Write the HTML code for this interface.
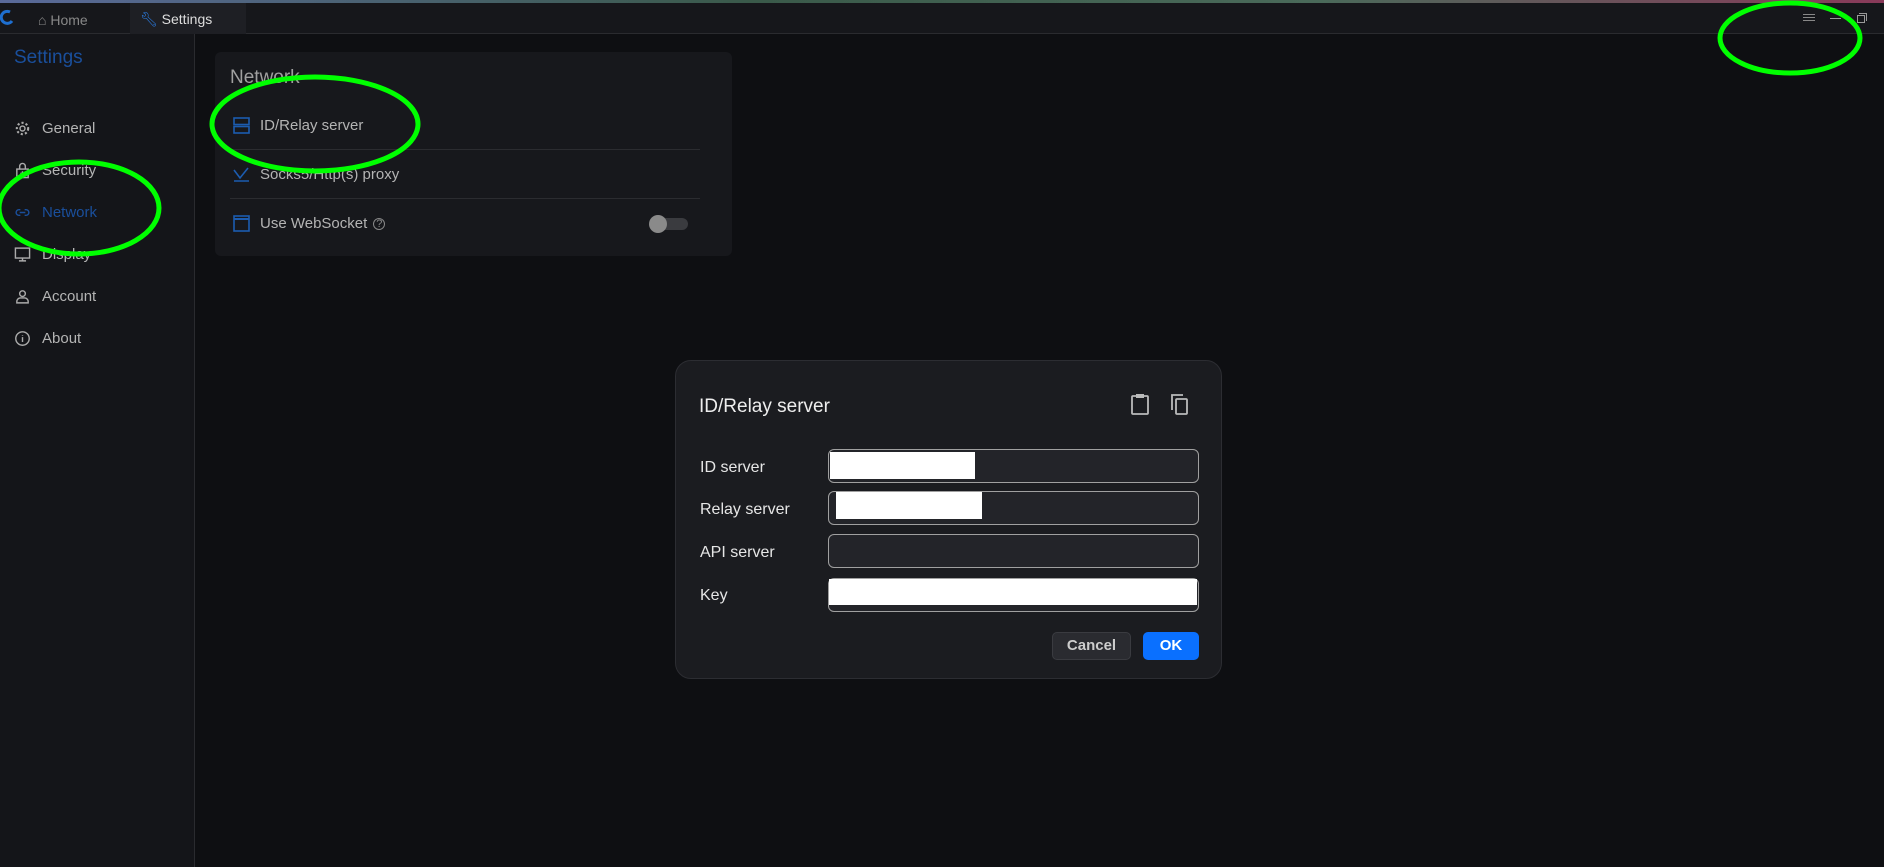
<!DOCTYPE html>
<html><head><meta charset="utf-8"><style>
*{margin:0;padding:0;box-sizing:border-box}
body{width:1884px;height:867px;background:#0e0f12;font-family:"Liberation Sans",sans-serif;position:relative;overflow:hidden;color:#c8c8c8}
.abs{position:absolute}
.topline{left:0;top:0;width:1884px;height:3px;background:linear-gradient(90deg,#5a6a9a,#3a5a4a 40%,#4a6a5a 70%,#8a3a5a)}
.tabbar{left:0;top:3px;width:1884px;height:31px;background:#16171b;border-bottom:1px solid #2a2b2f}
.sidebar{left:0;top:34px;width:195px;height:833px;background:#141519;border-right:1px solid #2a2b2f}
.mi{position:absolute;left:14px;font-size:15px;color:#b4b4b4;display:flex;align-items:center;gap:11px;height:20px}
.mi svg{width:17px;height:17px}
.card{left:215px;top:52px;width:517px;height:204px;background:#17181c;border-radius:6px}
.row{position:absolute;left:18px;font-size:15px;color:#b4b4b4;display:flex;align-items:center;gap:10px}
.div{position:absolute;left:15px;width:470px;height:1px;background:#2b2c30}
.dlg{left:675px;top:360px;width:547px;height:319px;background:#1b1c20;border:1px solid #2c2d32;border-radius:16px}
.lbl{position:absolute;left:24px;font-size:16px;color:#e6e6e6}
.inp{position:absolute;left:152px;width:371px;height:34px;border:1px solid #a0a0a0;border-radius:6px;background:#232429}
.wb{position:absolute;background:#fff}
</style></head><body>
<div class="abs topline"></div>
<div class="abs tabbar">
 <svg class="abs" style="left:0;top:6px" width="16" height="18" viewBox="0 0 16 18"><path d="M10 3 A6 6 0 1 0 12 12" stroke="#1e6fd0" stroke-width="3" fill="none"/></svg>
 <div class="abs" style="left:38px;top:9px;font-size:14px;color:#888">⌂ Home</div>
 <div class="abs" style="left:130px;top:0;width:116px;height:31px;background:#1e1f24"></div>
 <div class="abs" style="left:140px;top:8px;font-size:14px;color:#ddd"><span style="color:#2a7be0">🔧︎</span> Settings</div>
 <div class="abs" style="left:1803px;top:11px;width:12px;height:7px;border-top:1px solid #888;border-bottom:1px solid #888"></div>
 <div class="abs" style="left:1803px;top:14px;width:12px;height:1px;background:#888"></div>
 <div class="abs" style="left:1830px;top:15px;width:11px;height:1px;background:#999"></div>
 <div class="abs" style="left:1857px;top:12px;width:8px;height:8px;border:1px solid #999"></div>
 <div class="abs" style="left:1859px;top:10px;width:8px;height:8px;border-top:1px solid #999;border-right:1px solid #999"></div>
</div>
<div class="abs sidebar">
 <div class="abs" style="left:14px;top:13px;font-size:19px;color:#1a4f9c">Settings</div>
</div>
<div class="mi" style="top:118px"><svg viewBox="0 0 24 24"><circle cx="12" cy="12" r="3.5" fill="none" stroke="#aaa" stroke-width="2"/><circle cx="12" cy="12" r="8" fill="none" stroke="#aaa" stroke-width="3" stroke-dasharray="3 3"/></svg>General</div>
<div class="mi" style="top:160px"><svg viewBox="0 0 24 24"><rect x="4" y="10" width="16" height="12" fill="none" stroke="#aaa" stroke-width="2"/><path d="M8 10V6a4 4 0 0 1 8 0v4M12 13v6M9 16h6" stroke="#aaa" stroke-width="2" fill="none"/></svg>Security</div>
<div class="mi" style="top:202px;color:#1a4f9c"><svg viewBox="0 0 24 24"><path d="M9 8H7a4 4 0 0 0 0 8h2M15 8h2a4 4 0 0 1 0 8h-2M8 12h8" stroke="#1a4f9c" stroke-width="2" fill="none"/></svg>Network</div>
<div class="mi" style="top:244px"><svg viewBox="0 0 24 24"><rect x="2" y="3" width="20" height="14" fill="none" stroke="#aaa" stroke-width="2"/><path d="M12 17v4M7 21h10" stroke="#aaa" stroke-width="2"/></svg>Display</div>
<div class="mi" style="top:286px"><svg viewBox="0 0 24 24"><circle cx="12" cy="8" r="4" fill="none" stroke="#aaa" stroke-width="2"/><path d="M4 21v-2a5 5 0 0 1 5-5h6a5 5 0 0 1 5 5v2z" fill="none" stroke="#aaa" stroke-width="2"/></svg>Account</div>
<div class="mi" style="top:328px"><svg viewBox="0 0 24 24"><circle cx="12" cy="12" r="9.5" fill="none" stroke="#aaa" stroke-width="2"/><path d="M12 10v7M12 7v1" stroke="#aaa" stroke-width="2"/></svg>About</div>

<div class="abs card">
 <div class="abs" style="left:15px;top:15px;font-size:19px;color:#a0a0a0">Network</div>
 <div class="row" style="top:65px"><svg width="17" height="17" viewBox="0 0 17 17"><rect x="1" y="1" width="15" height="6.5" fill="none" stroke="#1c5cb0" stroke-width="1.6"/><rect x="1" y="9.5" width="15" height="6.5" fill="none" stroke="#1c5cb0" stroke-width="1.6"/></svg>ID/Relay server</div>
 <div class="div" style="top:97px"></div>
 <div class="row" style="top:114px"><svg width="17" height="17" viewBox="0 0 17 17"><path d="M1 4l6 8 8-10M1 15h15" stroke="#1c5cb0" stroke-width="1.6" fill="none"/></svg>Socks5/Http(s) proxy</div>
 <div class="div" style="top:146px"></div>
 <div class="row" style="top:163px"><svg width="17" height="17" viewBox="0 0 17 17"><rect x="1" y="1" width="15" height="15" fill="none" stroke="#1c5cb0" stroke-width="1.6"/><path d="M1 4h15" stroke="#1c5cb0" stroke-width="2"/></svg>Use WebSocket <span style="font-size:11px;color:#888;border:1px solid #888;border-radius:50%;width:12px;height:12px;display:inline-flex;align-items:center;justify-content:center;margin-left:-4px">?</span></div>
 <div class="abs" style="left:436px;top:166px;width:37px;height:12px;border-radius:6px;background:#3a3b3f"></div>
 <div class="abs" style="left:434px;top:163px;width:18px;height:18px;border-radius:50%;background:#8a8a8a"></div>
</div>

<div class="abs dlg">
 <div class="abs" style="left:23px;top:35px;font-size:19px;color:#eee">ID/Relay server</div>
 <svg class="abs" style="left:454px;top:32px" width="20" height="22" viewBox="0 0 20 22"><rect x="2" y="3" width="16" height="18" rx="1" fill="none" stroke="#bbb" stroke-width="1.8"/><rect x="6" y="1" width="8" height="4" fill="#bbb"/></svg>
 <svg class="abs" style="left:493px;top:32px" width="20" height="22" viewBox="0 0 20 22"><path d="M3 17V2h11" fill="none" stroke="#bbb" stroke-width="1.8"/><rect x="7" y="6" width="11" height="15" rx="1" fill="none" stroke="#bbb" stroke-width="1.8"/></svg>
 <div class="lbl" style="top:98px">ID server</div>
 <div class="lbl" style="top:140px">Relay server</div>
 <div class="lbl" style="top:183px">API server</div>
 <div class="lbl" style="top:226px">Key</div>
 <div class="inp" style="top:88px"></div>
 <div class="inp" style="top:130px"></div>
 <div class="inp" style="top:173px"></div>
 <div class="inp" style="top:217px"></div>
 <div class="wb" style="left:154px;top:91px;width:145px;height:27px"></div>
 <div class="wb" style="left:160px;top:131px;width:146px;height:27px"></div>
 <div class="wb" style="left:153px;top:218px;width:368px;height:26px"></div>
 <div class="abs" style="left:376px;top:271px;width:79px;height:28px;background:#2a2b30;border:1px solid #3a3b40;border-radius:5px;color:#ccc;font-size:15px;font-weight:bold;text-align:center;line-height:26px">Cancel</div>
 <div class="abs" style="left:467px;top:271px;width:56px;height:28px;background:#0a70ff;border-radius:5px;color:#fff;font-size:15px;font-weight:bold;text-align:center;line-height:28px">OK</div>
</div>

<svg class="abs" style="left:0;top:0" width="1884" height="867">
 <g fill="none" stroke="#00ff00" stroke-width="5">
  <ellipse cx="315" cy="124" rx="103" ry="47"/>
  <ellipse cx="79" cy="208" rx="80" ry="46"/>
  <ellipse cx="1790" cy="38" rx="70" ry="35"/>
 </g>
</svg>
</body></html>
